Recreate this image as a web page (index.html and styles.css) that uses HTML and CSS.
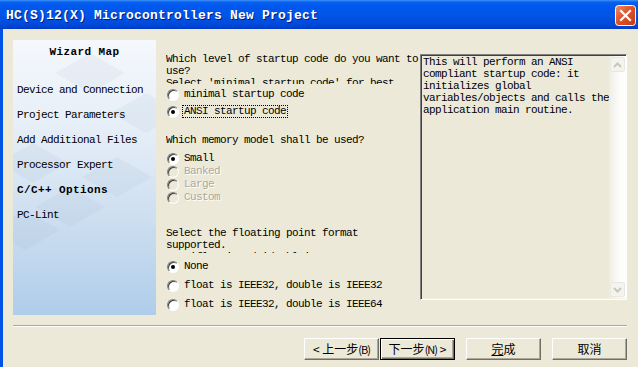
FILE: index.html
```html
<!DOCTYPE html>
<html lang="zh-CN">
<head>
    <meta charset="UTF-8">
    <title>HC(S)12(X) Microcontrollers New Project</title>
    <link rel="stylesheet" href="styles.css">
</head>
<body>
    <div class="window">
        <div class="titlebar">
            <span class="title">HC(S)12(X) Microcontrollers New Project</span>
            <span class="close">
                <svg width="21" height="21" viewBox="0 0 21 21">
                    <defs>
                        <linearGradient id="cg" x1="0" y1="0" x2="1" y2="1">
                            <stop offset="0" stop-color="#F08E6A"/>
                            <stop offset="0.45" stop-color="#E0532A"/>
                            <stop offset="1" stop-color="#C13A12"/>
                        </linearGradient>
                    </defs>
                    <rect x="0.5" y="0.5" width="20" height="20" rx="3" fill="url(#cg)" stroke="#fff"/>
                    <path d="M6 6 L15 15 M15 6 L6 15" stroke="#fff" stroke-width="2.2" stroke-linecap="square"/>
                </svg>
            </span>
        </div>

        <div class="body">
            <div class="main">
                <!-- 左侧向导 -->
                <div class="wizard">
                    <svg class="watermark" width="143" height="275" viewBox="0 0 143 275">
                        <polygon points="77,13 112,33 77,53 42,33"/>
                        <polygon points="133,53 168,73 133,93 98,73"/>
                        <polygon points="20,103 55,123 20,143 -15,123"/>
                        <polygon points="104,117 139,137 104,157 69,137"/>
                        <polygon points="57,147 92,167 57,187 22,167"/>
                        <polygon points="12,170 47,190 12,210 -23,190"/>
                    </svg>
                    <div class="wizard-title">Wizard Map</div>
                    <div class="wizard-item">Device and Connection</div>
                    <div class="wizard-item">Project Parameters</div>
                    <div class="wizard-item">Add Additional Files</div>
                    <div class="wizard-item">Processor Expert</div>
                    <div class="wizard-item current">C/C++ Options</div>
                    <div class="wizard-item">PC-Lint</div>
                </div>

                <!-- 选项 -->
                <div class="options">
                    <div class="question startup-q">
                        Which level of startup code do you want to<br>
                        use?<br>
                        Select 'minimal startup code' for best<br>
                        performance.
                    </div>
                    <div class="radio-row startup"><span class="radio"></span><span class="label">minimal startup code</span></div>
                    <div class="radio-row startup"><span class="radio on"></span><span class="label focus">ANSI startup code</span></div>

                    <div class="question memory-q">Which memory model shall be used?</div>
                    <div class="radio-row memory"><span class="radio on"></span><span class="label">Small</span></div>
                    <div class="radio-row memory disabled"><span class="radio"></span><span class="label">Banked</span></div>
                    <div class="radio-row memory disabled"><span class="radio"></span><span class="label">Large</span></div>
                    <div class="radio-row memory disabled"><span class="radio"></span><span class="label">Custom</span></div>

                    <div class="question float-q">
                        Select the floating point format<br>
                        supported.<br>
                        For 'float' and 'double' types.
                    </div>
                    <div class="radio-row float"><span class="radio on"></span><span class="label">None</span></div>
                    <div class="radio-row float"><span class="radio"></span><span class="label">float is IEEE32, double is IEEE32</span></div>
                    <div class="radio-row float"><span class="radio"></span><span class="label">float is IEEE32, double is IEEE64</span></div>
                </div>

                <!-- 说明 -->
                <div class="desc">
                    <div class="desc-text">
                        This will perform an ANSI<br>
                        compliant startup code: it<br>
                        initializes global<br>
                        variables/objects and calls the<br>
                        application main routine.
                    </div>
                    <div class="scrollbar">
                        <span class="scroll-btn">
                            <svg width="9" height="6" viewBox="0 0 9 6"><path d="M1 5 L4.5 1.5 L8 5" fill="none" stroke="#C9C7BA" stroke-width="2"/></svg>
                        </span>
                        <span class="scroll-btn">
                            <svg width="9" height="6" viewBox="0 0 9 6"><path d="M1 1 L4.5 4.5 L8 1" fill="none" stroke="#C9C7BA" stroke-width="2"/></svg>
                        </span>
                    </div>
                </div>
            </div>

            <div class="separator"></div>

            <div class="buttons">
                <button class="btn">&lt; 上一步<span class="acc">(B)</span></button>
                <button class="btn default">下一步<span class="acc">(N)</span> &gt;</button>
                <button class="btn gap"><u>完</u>成</button>
                <button class="btn gap">取消</button>
            </div>
        </div>
    </div>
</body>
</html>
```

FILE: styles.css
```css
/* 基础样式 */
body {
    margin: 0;
    padding: 0;
    background: #ECE9D8;
    font-family: "Liberation Mono", "Noto Sans CJK SC", monospace;
    font-size: 11px;
    letter-spacing: -0.6px;
    color: #000;
}

.window {
    width: 638px;
    height: 367px;
    display: flex;
    flex-direction: column;
    overflow: hidden;
}

/* 标题栏 */
.titlebar {
    height: 29px;
    box-sizing: border-box;
    padding: 0 2px 0 6px;
    display: flex;
    align-items: center;
    justify-content: space-between;
    background: linear-gradient(to bottom, #3D92FA 0, #0A62F0 2px, #0058EE 5px, #0055E7 50%, #004ADB 85%, #003BC4 100%);
}

.title {
    color: #fff;
    font-family: "Liberation Mono", monospace;
    font-weight: bold;
    font-size: 13px;
    letter-spacing: 0.2px;
    text-shadow: 1px 1px #0A1883;
    padding-top: 2px;
}

.close {
    display: flex;
    margin-top: 1px;
}

/* 主体 */
.body {
    flex: 1;
    border-left: 3px solid #0053E4;
    padding: 11px 0 0 10px;
}

.main {
    display: flex;
}

.wizard {
    width: 143px;
    height: 275px;
    position: relative;
    overflow: hidden;
    background: linear-gradient(to bottom, #F5F8FC 0, #E4EDF7 35%, #C9DCEF 70%, #AFCDEA 100%);
}

.watermark {
    position: absolute;
    left: 0;
    top: 0;
}

.watermark polygon {
    fill: #7E95AE;
    opacity: 0.08;
}

.wizard-title,
.wizard-item {
    position: relative;
}

.wizard-title {
    font-weight: bold;
    text-align: center;
    letter-spacing: 0.4px;
    line-height: 12px;
    padding-top: 6px;
    margin-bottom: 20px;
}

.wizard-item {
    height: 25px;
    line-height: 25px;
    padding-left: 4px;
}

.wizard-item.current {
    font-weight: bold;
    letter-spacing: 0.4px;
}

/* 选项列 */
.options {
    width: 254px;
    margin-left: 10px;
}

.question {
    line-height: 12px;
    overflow: hidden;
    white-space: nowrap;
}

.startup-q {
    margin-top: 13px;
    height: 31px;
    margin-bottom: 2px;
}

.memory-q {
    margin-top: 14px;
    margin-bottom: 6px;
}

.float-q {
    margin-top: 23px;
    height: 26px;
    margin-bottom: 4px;
}

.radio-row {
    display: flex;
    align-items: center;
}

.radio-row.startup {
    height: 17px;
}

.radio-row.memory {
    height: 13px;
}

.radio-row.float {
    height: 19px;
}

.radio {
    width: 12px;
    height: 12px;
    box-sizing: border-box;
    margin-left: 1px;
    margin-right: 4px;
    border-radius: 50%;
    border: 1px solid;
    border-color: #808080 #fff #fff #808080;
    background: #fff;
    box-shadow: inset 1px 1px #404040;
    position: relative;
}

.radio.on::after {
    content: "";
    position: absolute;
    left: 3px;
    top: 3px;
    width: 4px;
    height: 4px;
    border-radius: 50%;
    background: #000;
}

.label {
    line-height: 11px;
    padding: 0 1px;
}

.label.focus {
    outline: 1px dotted #000;
    outline-offset: 0;
}

.disabled .radio {
    background: #ECE9D8;
}

.disabled .label {
    color: #ACA899;
    text-shadow: 1px 1px #fff;
}

/* 说明框 */
.desc {
    width: 207px;
    height: 246px;
    margin-top: 14px;
    box-sizing: border-box;
    border: 1px solid;
    border-color: #808080 #fff #fff #808080;
    box-shadow: inset 1px 1px #404040, inset -1px -1px #F1EFE2;
    display: flex;
    padding: 1px;
}

.desc-text {
    flex: 1;
    line-height: 12px;
    padding-left: 1px;
    white-space: nowrap;
}

.scrollbar {
    width: 17px;
    display: flex;
    flex-direction: column;
    justify-content: space-between;
    background: linear-gradient(to right, #EEEDE5, #FCFCFA 60%, #fff);
}

.scroll-btn {
    width: 15px;
    height: 15px;
    margin: 1px;
    box-sizing: border-box;
    border: 1px solid #E8E7E1;
    border-radius: 2px;
    background: #F4F3EE;
    display: flex;
    align-items: center;
    justify-content: center;
}

/* 分隔线 */
.separator {
    width: 614px;
    height: 1px;
    margin-top: 10px;
    background: #ACA899;
    border-bottom: 1px solid #fff;
}

/* 按钮 */
.buttons {
    width: 614px;
    margin-top: 11px;
    display: flex;
    justify-content: flex-end;
}

.btn {
    width: 75px;
    height: 22px;
    box-sizing: border-box;
    margin: 0 0 0 1px;
    padding: 0;
    font-family: "Noto Sans CJK SC", "Liberation Sans", sans-serif;
    font-size: 12px;
    letter-spacing: 0;
    color: #000;
    background: #ECE9D8;
    border: 1px solid;
    border-color: #fff #716F64 #716F64 #fff;
    box-shadow: inset -1px -1px #ACA899;
    line-height: 18px;
}

.btn.default {
    border: 1px solid #000;
    box-shadow: inset 1px 1px #fff, inset -1px -1px #716F64, inset -2px -2px #ACA899;
}

.btn.gap {
    margin-left: 11px;
}

.acc {
    font-size: 11px;
    letter-spacing: -1px;
}
```
